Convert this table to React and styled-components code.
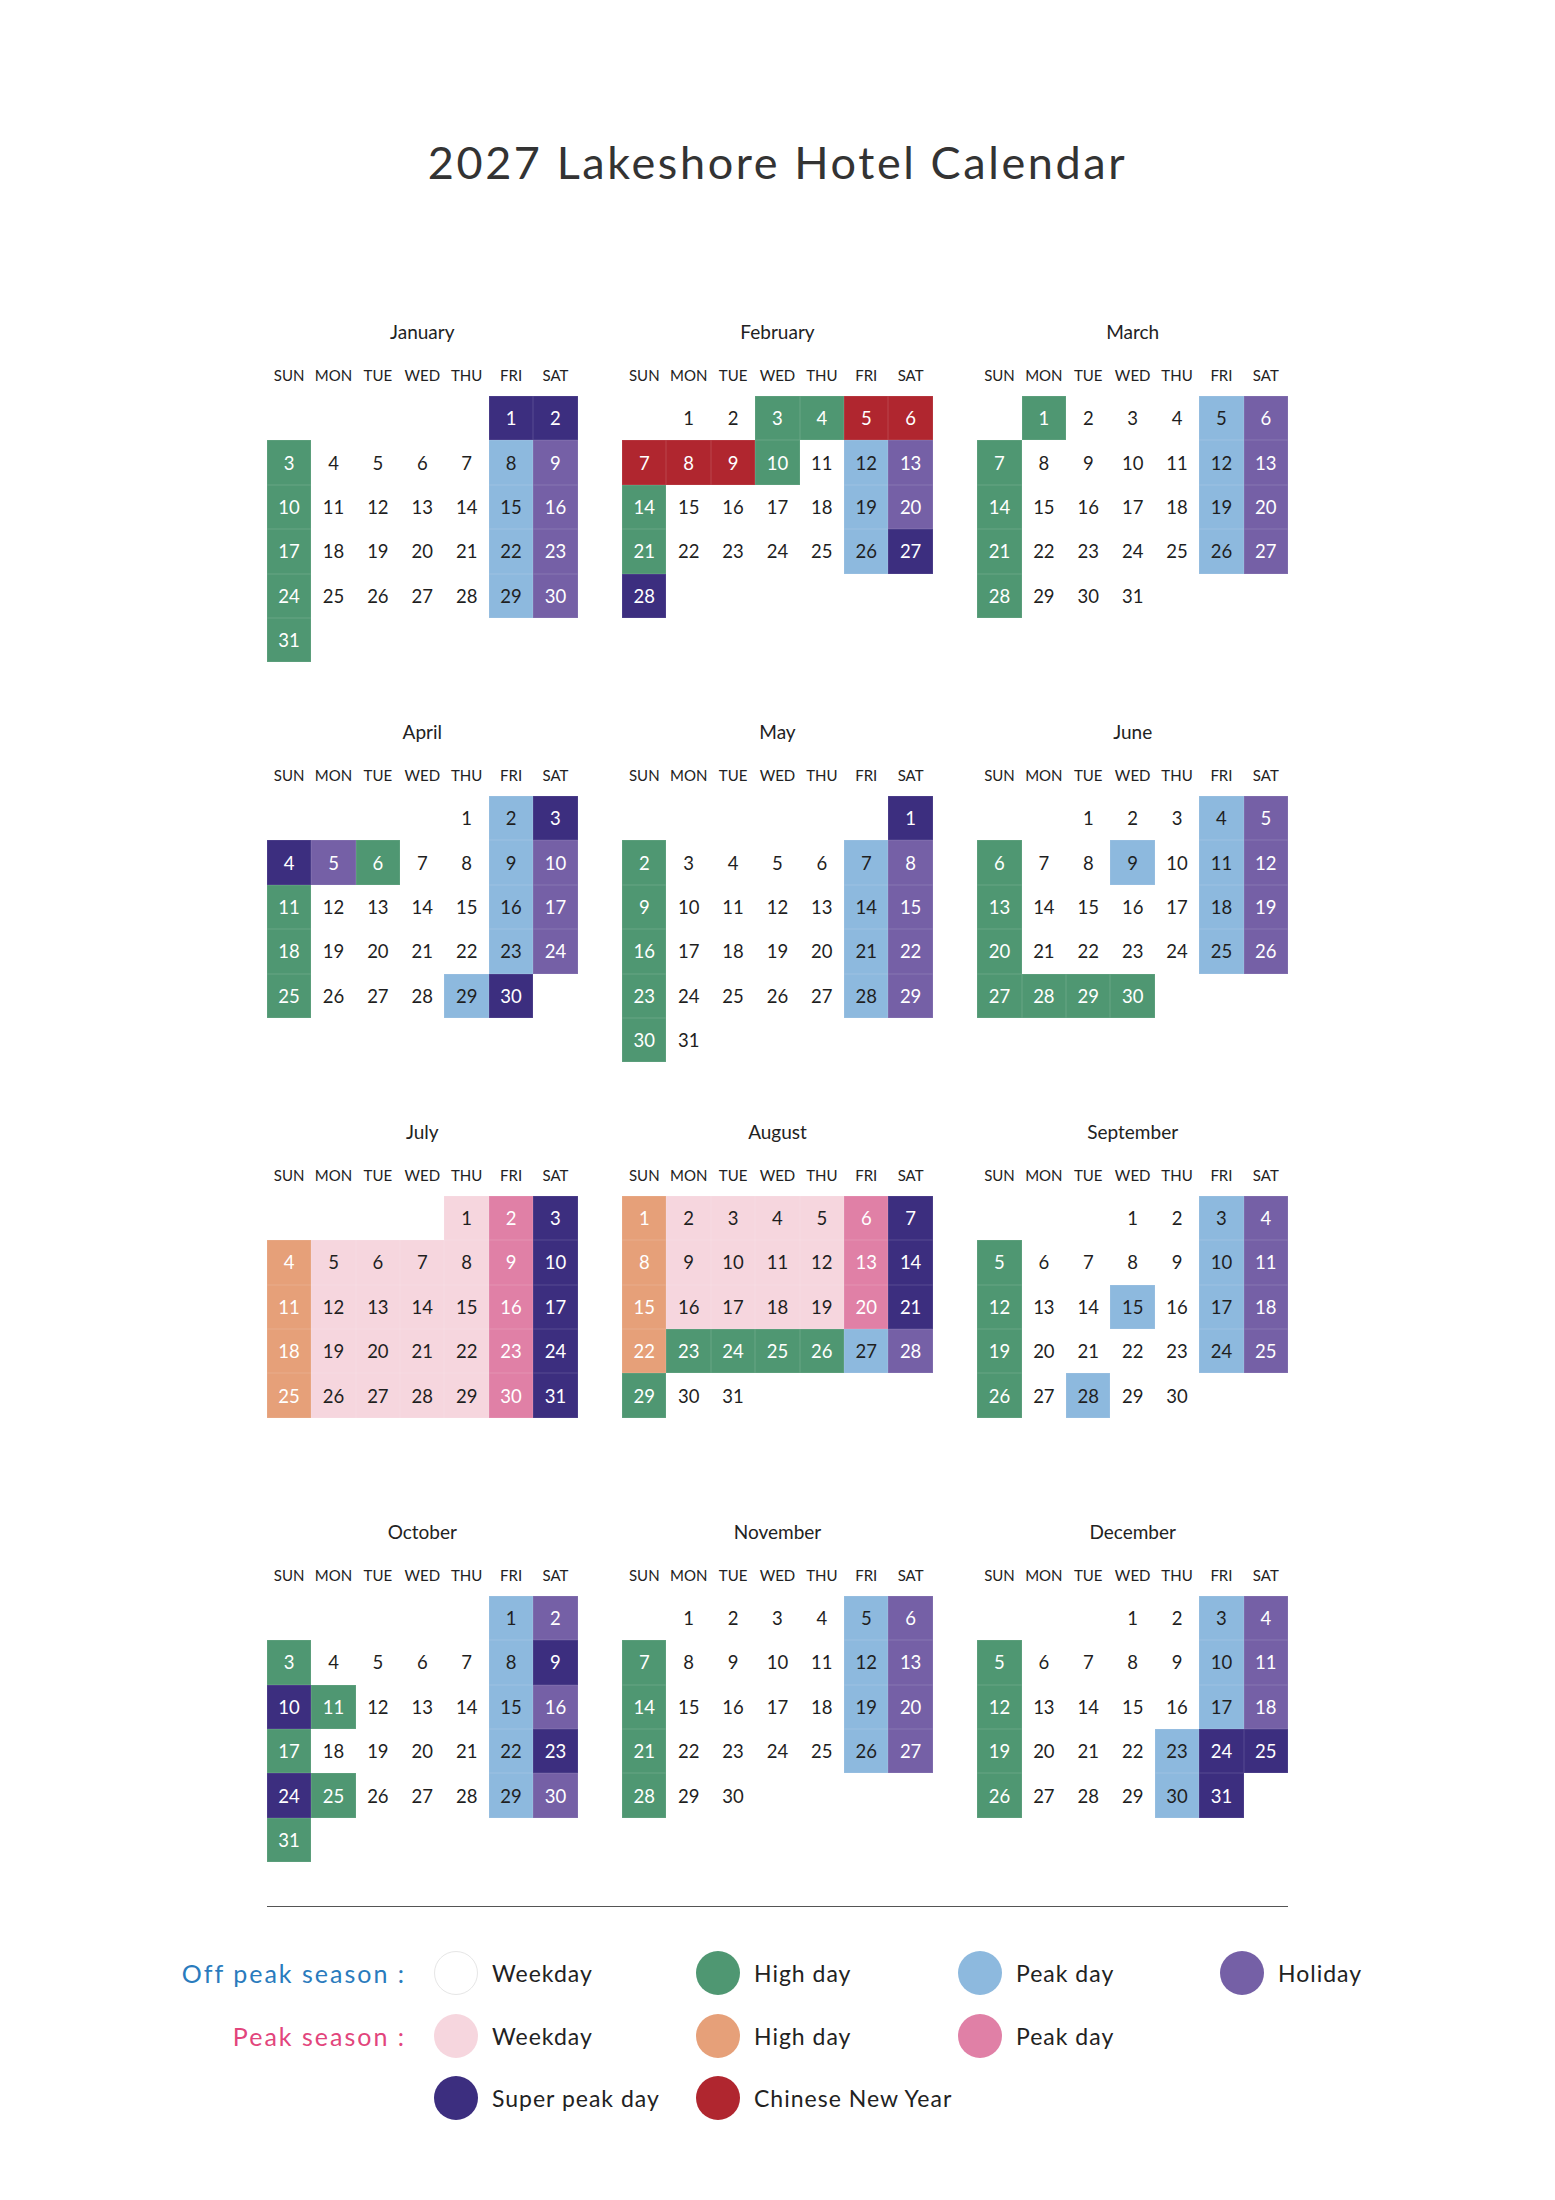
import React from "react";
import styled, { createGlobalStyle } from "styled-components";

const GlobalStyle = createGlobalStyle`
  html, body {
    margin: 0;
    padding: 0;
    background: #ffffff;
  }
  body {
    font-family: Lato, "Noto Sans", "DejaVu Sans", sans-serif;
    color: #222;
  }
`

const CELL = 44.4;

const SWATCH = {
  W: { bg: "transparent", fg: "#1f1f1f" },
  G: { bg: "#4f9772", fg: "#ffffff" },
  B: { bg: "#8db9de", fg: "#1f1f1f" },
  P: { bg: "#7560a6", fg: "#ffffff" },
  N: { bg: "#3c2e7f", fg: "#ffffff" },
  R: { bg: "#b0262f", fg: "#ffffff" },
  L: { bg: "#f6d6de", fg: "#1f1f1f" },
  O: { bg: "#e6a079", fg: "#ffffff" },
  K: { bg: "#e080a6", fg: "#ffffff" },
};

// one letter per day, see SWATCH
const months = [
  { name: "January", days: "NNGWWWWBPGWWWWBPGWWWWBPGWWWWBPG" },
  { name: "February", days: "WWGGRRRRRGWBPGWWWWBPGWWWWBNN" },
  { name: "March", days: "GWWWBPGWWWWBPGWWWWBPGWWWWBPGWWW" },
  { name: "April", days: "WBNNPGWWBPGWWWWBPGWWWWBPGWWWBN" },
  { name: "May", days: "NGWWWWBPGWWWWBPGWWWWBPGWWWWBPGW" },
  { name: "June", days: "WWWBPGWWBWBPGWWWWBPGWWWWBPGGGG" },
  { name: "July", days: "LKNOLLLLKNOLLLLKNOLLLLKNOLLLLKN" },
  { name: "August", days: "OLLLLKNOLLLLKNOLLLLKNOGGGGBPGWW" },
  { name: "September", days: "WWBPGWWWWBPGWWBWBPGWWWWBPGWBWW" },
  { name: "October", days: "BPGWWWWBNNGWWWBPGWWWWBNNGWWWBPG" },
  { name: "November", days: "WWWWBPGWWWWBPGWWWWBPGWWWWBPGWW" },
  { name: "December", days: "WWBPGWWWWBPGWWWWBPGWWWBNNGWWWBN" },
];

const weekdays = ["SUN", "MON", "TUE", "WED", "THU", "FRI", "SAT"];

const Page = styled.div`
  padding-top: 134px;
  padding-bottom: 80px;
`

const Title = styled.h1`
  margin: 0;
  text-align: center;
  font-family: Lato, "Noto Sans", sans-serif;
  font-weight: 400;
  font-size: 45px;
  line-height: 56px;
  letter-spacing: 2.6px;
  color: #333;
`

const Year = styled.div`
  margin-top: 130px;
  display: grid;
  grid-template-columns: repeat(3, ${CELL * 7}px);
  column-gap: ${CELL}px;
  row-gap: 57.6px;
  justify-content: center;
`

const Month = styled.section`
  display: flex;
  flex-direction: column;
`

const MonthName = styled.div`
  text-align: center;
  font-size: 19px;
  line-height: 24px;
  color: #222;
`

const WeekRow = styled.div`
  margin-top: 21px;
  margin-bottom: 11px;
  display: grid;
  grid-template-columns: repeat(7, ${CELL}px);
  font-size: 15px;
  line-height: 20px;
  color: #222;
`

const WeekName = styled.span`
  text-align: center;
  white-space: nowrap;
`

const Days = styled.div`
  display: grid;
  grid-template-columns: repeat(7, ${CELL}px);
  grid-template-rows: repeat(6, ${CELL}px);
`

const Day = styled.div`
  display: flex;
  align-items: center;
  justify-content: center;
  font-size: 18.5px;
  background: ${(p) => SWATCH[p.$kind].bg};
  color: ${(p) => SWATCH[p.$kind].fg};
  box-shadow: ${(p) =>
    p.$kind === "W" ? "none" : "inset 0 0 0 0.5px rgba(255,255,255,0.14)"};
`

const Rule = styled.hr`
  width: ${CELL * 23}px;
  margin: 44px auto 0;
  border: none;
  border-top: 1.5px solid #555;
`

const Legend = styled.div`
  margin-top: 44px;
  display: grid;
  grid-template-columns: 406px repeat(4, 234px);
  column-gap: 28px;
  row-gap: 18.5px;
  align-items: center;
`

const Season = styled.div`
  text-align: right;
  font-size: 25px;
  letter-spacing: 2px;
  white-space: nowrap;
  color: ${(p) => p.$color};
`

const Key = styled.div`
  display: flex;
  align-items: center;
  gap: 14px;
  font-size: 23px;
  letter-spacing: 1px;
  white-space: nowrap;
  color: #222;
`

const Dot = styled.span`
  width: 44px;
  height: 44px;
  border-radius: 50%;
  flex: none;
  background: ${(p) => p.$bg};
  border: ${(p) => (p.$outline ? "1px solid #e6e6e6" : "none")};
  box-sizing: border-box;
`

const MonthView = ({ index, name, days }) => {
  const start = new Date(2027, index, 1).getDay();
  return (
    <Month>
      <MonthName>{name}</MonthName>
      <WeekRow>
        {weekdays.map((w) => (
          <WeekName key={w}>{w}</WeekName>
        ))}
      </WeekRow>
      <Days>
        {days.split("").map((kind, i) => (
          <Day
            key={i}
            $kind={kind}
            style={i === 0 ? { gridColumnStart: start + 1 } : undefined}
          >
            {i + 1}
          </Day>
        ))}
      </Days>
    </Month>
  );
};

const LegendKey = ({ bg, outline, children }) => (
  <Key>
    <Dot $bg={bg} $outline={outline} />
    {children}
  </Key>
);

export default function App() {
  return (
    <Page>
      <GlobalStyle />
      <Title>2027 Lakeshore Hotel Calendar</Title>
      <Year>
        {months.map((m, i) => (
          <MonthView key={m.name} index={i} name={m.name} days={m.days} />
        ))}
      </Year>
      <Rule />
      <Legend>
        <Season $color="#2a7bbd">Off peak season :</Season>
        <LegendKey bg="#ffffff" outline>Weekday</LegendKey>
        <LegendKey bg={SWATCH.G.bg}>High day</LegendKey>
        <LegendKey bg={SWATCH.B.bg}>Peak day</LegendKey>
        <LegendKey bg={SWATCH.P.bg}>Holiday</LegendKey>

        <Season $color="#e2457c">Peak season :</Season>
        <LegendKey bg={SWATCH.L.bg}>Weekday</LegendKey>
        <LegendKey bg={SWATCH.O.bg}>High day</LegendKey>
        <LegendKey bg={SWATCH.K.bg}>Peak day</LegendKey>
        <span />

        <span />
        <LegendKey bg={SWATCH.N.bg}>Super peak day</LegendKey>
        <LegendKey bg={SWATCH.R.bg}>Chinese New Year</LegendKey>
      </Legend>
    </Page>
  );
}
